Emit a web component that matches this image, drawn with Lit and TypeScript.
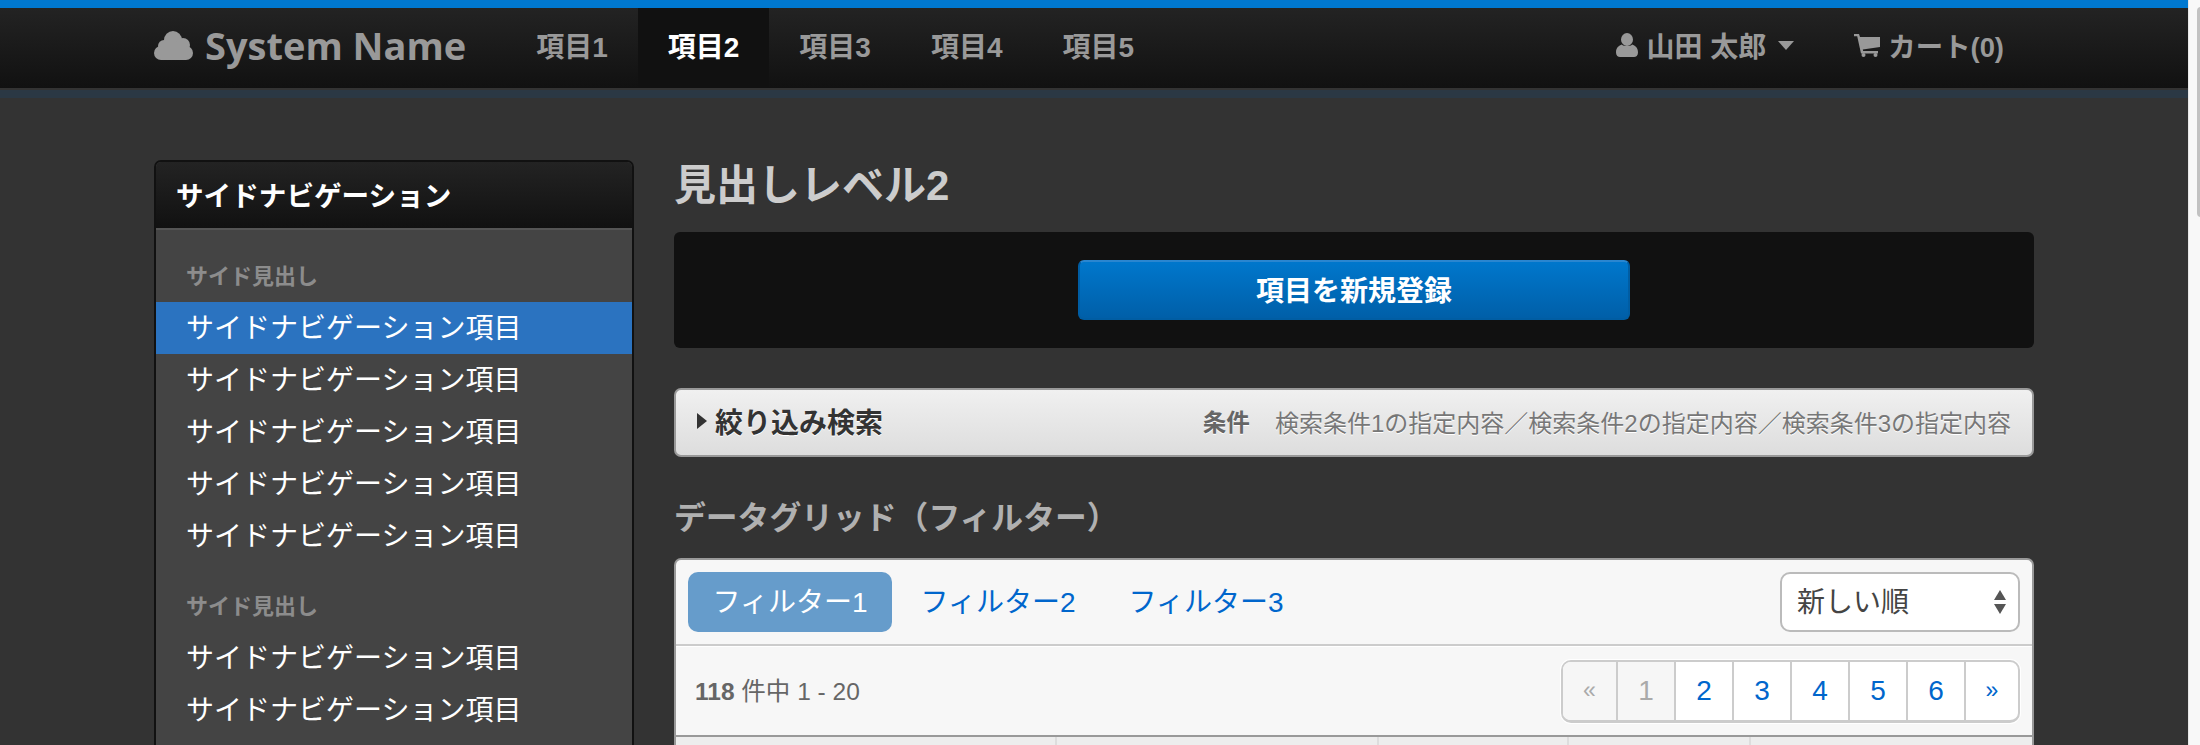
import { LitElement, html, css } from "lit";
import { customElement } from "lit/decorators.js";

@customElement("app-root")
export class AppRoot extends LitElement {
  static styles = css`
    :host { display: flex; height: 745px; overflow: hidden; background: #333; font-family: "Liberation Sans", "Noto Sans CJK JP", sans-serif; }
    * { box-sizing: border-box; }
    .page { flex: 1; min-width: 0; height: 745px; overflow: hidden; }
    .scroll { width: 12px; flex: none; background: #f8f8f8; border-left: 1px solid #e8e8e8; padding: 7px 0 0 8px; }
    .thumb { width: 8px; height: 210px; background: #c2c2c2; border-radius: 4px; }

    .topbar { height: 98px; border-top: 8px solid #0078d0; background: #2b3844; }
    .topbar-in { height: 82px; background: linear-gradient(#232323, #111); border-bottom: 2px solid #333; }
    .wrap { width: 1880px; margin: 0 auto; }
    .hdr { display: flex; align-items: stretch; height: 80px; }
    .brand { display: flex; align-items: center; gap: 12px; margin-right: 40px; color: #999; font: 700 38px "Open Sans", sans-serif; }
    .brand svg { margin-top: -5px; }
    .brand span { margin-top: -6px; }
    .tab { display: flex; align-items: center; gap: 9px; padding: 0 30px 6px; color: #999; font-size: 28px; font-weight: 700; }
    .tab.on { background: #111; color: #fff; }
    .tab.cart { font-size: 27.4px; gap: 8px; }
    .spacer { flex: 1; }
    .caret { width: 0; height: 0; margin-left: 3px; border: 8px solid transparent; border-top: 9px solid #999; border-bottom: 0; }

    .cols { display: flex; gap: 40px; padding-top: 62px; align-items: flex-start; }
    .side { width: 480px; flex: none; border: 2px solid #111; border-radius: 7px; overflow: hidden; background: #444; }
    .side-h { height: 66px; padding: 0 0 3px 20px; display: flex; align-items: center; background: linear-gradient(#232323, #111); color: #fff; font-size: 27.6px; font-weight: 700; }
    .side-b { border-top: 2px solid #555; padding-top: 20px; }
    .side-t { height: 52px; padding: 0 0 5px 30px; display: flex; align-items: center; color: #8c8c8c; font-size: 22px; font-weight: 700; }
    .side-i { height: 52px; padding: 0 0 5px 30px; display: flex; align-items: center; color: #fff; font-size: 28px; }
    .side-i.on { background: #2b73c0; }
    .group { margin-bottom: 18px; }

    .main { flex: 1; min-width: 0; }
    h2 { margin: 0 0 22px; height: 50px; line-height: 52px; color: #ccc; font-size: 42px; font-weight: 700; }
    .panel { height: 116px; display: flex; align-items: center; justify-content: center; background: #111; border-radius: 6px; margin-bottom: 40px; }
    .btn { width: 552px; height: 60px; padding-bottom: 3px; display: flex; align-items: center; justify-content: center; border: 2px solid #005da3; border-top-color: #2a86d0; border-radius: 6px; background: linear-gradient(#0077cc, #005fa8); color: #fff; font-size: 28px; font-weight: 700; }
    .search { height: 69px; display: flex; align-items: center; padding: 0 21px 3px; border: 2px solid #999; border-radius: 7px; background: linear-gradient(#f0f0f0, #ddd); text-shadow: 0 1px 0 #fff; }
    .tri { width: 0; height: 0; border: 8px solid transparent; border-left: 10px solid #333; border-right: 0; margin-right: 8px; }
    .search b { color: #333; font-size: 28px; font-weight: 700; }
    .search .k { margin-left: auto; margin-right: 25px; color: #666; font-size: 23.6px; font-weight: 700; }
    .search .v { color: #777; font-size: 24px; }
    h3 { margin: 38px 0 19px; height: 44px; line-height: 46px; color: #b0b0b0; font-size: 31.8px; font-weight: 700; }

    .grid { border: 2px solid #999; border-bottom: 0; border-radius: 7px 7px 0 0; background: #f7f7f7; }
    .filters { height: 86px; padding: 12px 12px 0; display: flex; align-items: flex-start; border-bottom: 2px solid #ccc; box-shadow: 0 1px 0 #fff; }
    .f { height: 60px; padding: 0 24.5px 5px; margin-right: 4px; display: flex; align-items: center; color: #0066cc; font-size: 28px; border-radius: 10px; }
    .f.on { background: #669ccb; color: #fff; }
    .sel { margin-left: auto; width: 240px; height: 60px; padding: 0 12px 0 15px; display: flex; align-items: center; justify-content: space-between; background: #fff; border: 2px solid #bbb; border-radius: 10px; color: #444; font-size: 28px; }
    .sel span:first-child { margin-bottom: 4px; }
    .arrows { display: flex; flex-direction: column; gap: 4px; }
    .up, .dn { width: 0; height: 0; border: 6.5px solid transparent; border-top: 0; border-bottom: 10px solid #555; }
    .dn { border-bottom: 0; border-top: 10px solid #555; border-left-width: 6.5px; }
    .bar { height: 91px; padding: 0 12px 0 19px; display: flex; align-items: center; justify-content: space-between; border-bottom: 2px solid #999; color: #666; font-size: 24.5px; }
    .count { margin-bottom: 2px; }
    .pages { display: flex; height: 63px; margin-top: 1px; border: 2px solid #ccc; border-bottom-width: 3px; border-radius: 10px; background: #fff; box-shadow: 0 0 0 1px #fff; overflow: hidden; }
    .p { width: 58px; display: flex; align-items: center; justify-content: center; color: #0066cc; font-size: 28px; border-left: 2px solid #ccc; }
    .p:first-child { width: 53px; border-left: 0; }
    .p:last-child { width: 54px; }
    .p.small { font-size: 23px; }
    .p.off { background: #f6f6f6; color: #aaa; }
    .thead { height: 20px; display: grid; grid-template-columns: 381px 322px 190px 182px 1fr; background: #ededed; }
    .thead div { border-right: 2px solid #ddd; }
    .thead div:last-child { border-right: 0; }
  `;

  render() {
    const item = html`<div class="side-i">サイドナビゲーション項目</div>`;
    return html`
      <div class="page">
        <div class="topbar">
          <div class="topbar-in">
            <div class="wrap hdr">
              <div class="brand">
                <svg width="39" height="29" viewBox="0 0 39 29" fill="#999"><circle cx="19" cy="9" r="9"/><circle cx="10" cy="15" r="6"/><circle cx="29" cy="14" r="7"/><circle cx="7" cy="22" r="7"/><circle cx="32" cy="22" r="7"/><rect x="7" y="12" width="25" height="17"/></svg>
                <span>System Name</span>
              </div>
              <div class="tab">項目1</div>
              <div class="tab on">項目2</div>
              <div class="tab">項目3</div>
              <div class="tab">項目4</div>
              <div class="tab">項目5</div>
              <div class="spacer"></div>
              <div class="tab">
                <svg width="22" height="24" viewBox="0 0 22 24" fill="#999"><ellipse cx="11" cy="6.5" rx="6" ry="6.5"/><path d="M0 19.5C0 14.5 3 12.5 5.8 11.5 7.5 13.5 14.5 13.5 16.2 11.5 19 12.5 22 14.5 22 19.5 22 22.5 20 24 18 24H4C2 24 0 22.5 0 19.5Z"/></svg>
                <span>山田 太郎</span><i class="caret"></i>
              </div>
              <div class="tab cart">
                <svg width="26" height="24" viewBox="0 0 26 24" fill="#999"><path d="M0 1H5L6 4H26V14L8.8 16.5 9.2 18H24V20.5H7L3.2 3.2H0Z"/><circle cx="9.5" cy="22" r="2"/><circle cx="21.5" cy="22" r="2"/></svg>
                <span>カート(0)</span>
              </div>
            </div>
          </div>
        </div>
        <div class="wrap cols">
          <aside class="side">
            <div class="side-h">サイドナビゲーション</div>
            <div class="side-b">
              <div class="group">
                <div class="side-t">サイド見出し</div>
                <div class="side-i on">サイドナビゲーション項目</div>
                ${item}${item}${item}${item}
              </div>
              <div class="group">
                <div class="side-t">サイド見出し</div>
                ${item}${item}
              </div>
            </div>
          </aside>
          <main class="main">
            <h2>見出しレベル2</h2>
            <div class="panel"><div class="btn">項目を新規登録</div></div>
            <div class="search">
              <i class="tri"></i><b>絞り込み検索</b>
              <span class="k">条件</span>
              <span class="v">検索条件1の指定内容／検索条件2の指定内容／検索条件3の指定内容</span>
            </div>
            <h3>データグリッド（フィルター）</h3>
            <div class="grid">
              <div class="filters">
                <div class="f on">フィルター1</div>
                <div class="f">フィルター2</div>
                <div class="f">フィルター3</div>
                <div class="sel"><span>新しい順</span><span class="arrows"><i class="up"></i><i class="dn"></i></span></div>
              </div>
              <div class="bar">
                <div class="count"><b>118</b> 件中 1 - 20</div>
                <div class="pages">
                  <div class="p small off">«</div>
                  <div class="p off">1</div>
                  <div class="p">2</div><div class="p">3</div><div class="p">4</div><div class="p">5</div><div class="p">6</div>
                  <div class="p small">»</div>
                </div>
              </div>
              <div class="thead"><div></div><div></div><div></div><div></div><div></div></div>
            </div>
          </main>
        </div>
      </div>
      <div class="scroll"><div class="thumb"></div></div>
    `;
  }
}
